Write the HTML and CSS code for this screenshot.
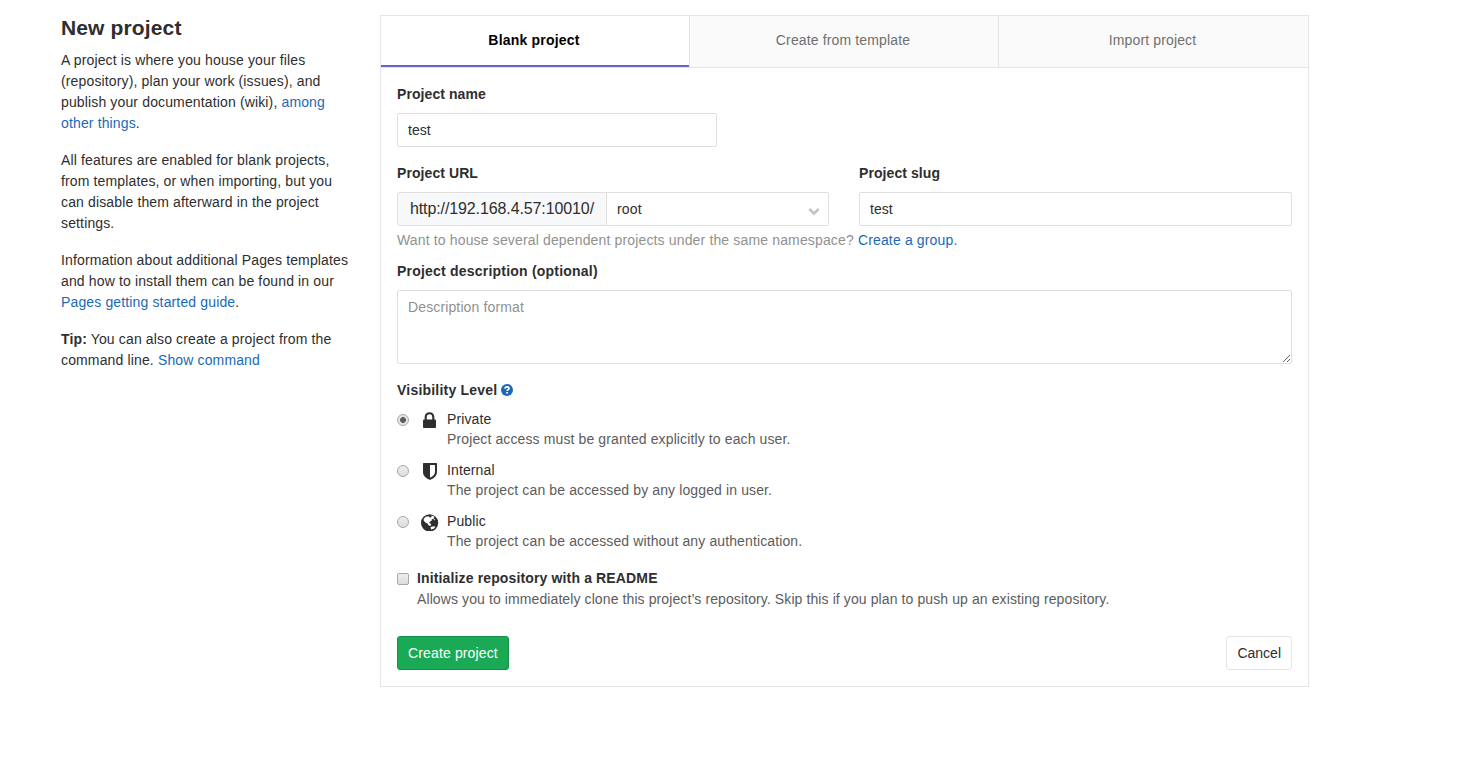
FILE: index.html
```html
<!DOCTYPE html>
<html lang="en">
<head>
<meta charset="utf-8">
<title>New project</title>
<link rel="stylesheet" href="styles.css">
</head>
<body>
<main class="page">
  <aside class="intro">
    <h1>New project</h1>
    <p>A project is where you house your files<br>(repository), plan your work (issues), and<br>publish your documentation (wiki), <a>among<br>other things</a>.</p>
    <p>All features are enabled for blank projects,<br>from templates, or when importing, but you<br>can disable them afterward in the project<br>settings.</p>
    <p>Information about additional Pages templates<br>and how to install them can be found in our<br><a>Pages getting started guide</a>.</p>
    <p><b>Tip:</b> You can also create a project from the<br>command line. <a>Show command</a></p>
  </aside>
  <section class="panel">
    <nav class="tabs">
      <a class="tab active">Blank project</a>
      <a class="tab">Create from template</a>
      <a class="tab">Import project</a>
    </nav>
    <form class="form">
      <div class="label">Project name</div>
      <input class="control name" type="text" value="test">
      <div class="columns">
        <div>
          <div class="label">Project URL</div>
          <div class="url">
            <span class="prefix">http://192.168.4.57:10010/</span>
            <div class="select"><span>root</span><svg class="chevron" viewBox="0 0 12 9"><path d="M1.4 2 6 6.6 10.600 2" fill="none" stroke="#c4c4c4" stroke-width="2.7"/></svg></div>
          </div>
        </div>
        <div>
          <div class="label">Project slug</div>
          <input class="control" type="text" value="test">
        </div>
      </div>
      <div class="help">Want to house several dependent projects under the same namespace? <a>Create a group.</a></div>
      <div class="label wide">Project description (optional)</div>
      <textarea class="control description" placeholder="Description format"></textarea>
      <div class="label wide visibility">Visibility Level
        <svg class="question" viewBox="0 0 12 12"><circle cx="6" cy="6" r="6" fill="#1b69b6"/><path d="M4 4.600C4.100 3.400 4.900 2.800 6 2.800c1.200 0 2 .6 2 1.600C8 5.600 6.100 5.600 6.100 7" fill="none" stroke="#fff" stroke-width="1.700"/><path d="M5.200 7.900h1.800v1.700H5.200z" fill="#fff"/></svg>
      </div>
      <div class="option">
        <span class="radio checked"></span>
        <svg class="icon" viewBox="0 0 18 18"><path d="M4.700 10V6.100a3.800 3.900 0 0 1 7.600 0V10" fill="none" stroke="#2e2e2e" stroke-width="2.100"/><rect x="2" y="8.600" width="13" height="8.400" rx="1" fill="#2e2e2e"/></svg>
        <div class="text"><div>Private</div><div class="muted">Project access must be granted explicitly to each user.</div></div>
      </div>
      <div class="option">
        <span class="radio"></span>
        <svg class="icon" viewBox="0 0 18 18"><path d="M2 1.700Q2 1 2.700 1h12.600q.7 0 .7.700V10c0 4-3.200 6.400-7 8-3.800-1.600-7-4-7-8zM9 3v12.700c3-1.500 5-3.200 5-5.900V3z" fill="#2e2e2e" fill-rule="evenodd"/></svg>
        <div class="text"><div>Internal</div><div class="muted">The project can be accessed by any logged in user.</div></div>
      </div>
      <div class="option">
        <span class="radio"></span>
        <svg class="icon" viewBox="0 0 18 18"><circle cx="8.600" cy="9.900" r="8.600" fill="#2e2e2e"/><path d="M2.800 5.800 4.700 3.800l2.700-.6 1.400 1.300 1.600-.3.200-1.600 2.700 1-.3 1.800-2.100.8-.5 1.700-1.600.5-.5 1.500 1.900 1.200-.7 1.900-1.700-.4-1.300-2-2.200-1.200-1.700-2.200zM12.300 6.200l2 .1-.9 1.300zM9.600 14.100l3-.9 2 .5-1.800 2-2.800.9z" fill="#fff"/></svg>
        <div class="text"><div>Public</div><div class="muted">The project can be accessed without any authentication.</div></div>
      </div>
      <div class="readme">
        <span class="checkbox"></span>
        <div><b>Initialize repository with a README</b><div class="muted">Allows you to immediately clone this project’s repository. Skip this if you plan to push up an existing repository.</div></div>
      </div>
      <div class="actions"><button class="button create" type="button">Create project</button><button class="button" type="button">Cancel</button></div>
    </form>
  </section>
</main>
</body>
</html>
```
FILE: styles.css
```css
* { box-sizing: border-box; }
body {
  margin: 0;
  background: #fff;
  color: #2e2e2e;
  font: 14px/21px "Liberation Sans", Arial, sans-serif;
  letter-spacing: 0.14px;
}
a { color: #1b69b6; text-decoration: none; }
.page { display: grid; grid-template-columns: 319px 929px; padding: 15px 0 0 61px; }
.intro { white-space: nowrap; }
h1 { margin: 0 0 9px; font-size: 21px; line-height: 26px; }
.intro p { margin: 0 0 16px; }
.panel { height: 672px; border: 1px solid #e5e5e5; }
.tabs { display: grid; grid-template-columns: 309px 309px 309px; height: 52px; border-bottom: 1px solid #e5e5e5; }
.tab {
  padding: 14px 2px 0 0;
  text-align: center;
  color: #707070;
  background: #fafafa;
  border-right: 1px solid #e5e5e5;
}
.tab:last-child { border-right: 0; }
.tab.active {
  color: #000;
  font-weight: bold;
  letter-spacing: 0.2px;
  background: linear-gradient(#6666c4, #6666c4) bottom / 100% 2px no-repeat #fff;
}
.form { padding: 16px; }
.label { height: 21px; margin-bottom: 8px; font-weight: bold; letter-spacing: 0.08px; }
.label.wide { letter-spacing: 0.21px; }
.control {
  display: block;
  width: 100%;
  height: 34px;
  margin: 0;
  padding: 6px 10px;
  font: inherit;
  color: #2e2e2e;
  background: #fff;
  border: 1px solid #dfdfdf;
  border-radius: 2px;
}
.name { width: 320px; }
.columns { display: grid; grid-template-columns: 432px 433px; gap: 30px; margin-top: 16px; }
.url { display: flex; height: 34px; }
.prefix {
  width: 210px;
  padding: 0 12px;
  font-size: 16px;
  line-height: 32px;
  letter-spacing: -0.11px;
  white-space: nowrap;
  background: #f7f8fa;
  border: 1px solid #dfdfdf;
  border-radius: 3px 0 0 3px;
}
.select {
  flex: 1;
  display: flex;
  align-items: center;
  justify-content: space-between;
  padding: 1px 8px 0 10px;
  border: 1px solid #dfdfdf;
  border-left: 0;
  border-radius: 0 2px 2px 0;
}
.chevron { width: 12px; height: 9px; margin-top: 4px; }
.help { margin: 4px 0 10px; color: #919191; letter-spacing: 0.15px; }
.description { height: 74px; resize: vertical; letter-spacing: 0.13px; }
.description::placeholder { color: #919191; }
.visibility { display: flex; align-items: center; gap: 4px; margin-top: 16px; }
.question { width: 12px; height: 12px; margin-top: -1px; }
.option { display: flex; height: 40px; margin-bottom: 11px; line-height: 20px; letter-spacing: 0.12px; }
.radio, .checkbox {
  flex: none;
  width: 12px;
  height: 12px;
  margin-top: 5px;
  border: 1px solid #a8a8a8;
  background: linear-gradient(#eee, #dcdcdc);
}
.radio { border-radius: 50%; }
.radio.checked { background: radial-gradient(circle, #5c5c5c 2.6px, #e6e6e6 3.2px); }
.checkbox { border-radius: 2px; margin-right: 8px; }
.icon { width: 18px; height: 18px; margin: 2px 8px 0 12px; }
.muted { color: #5c5c5c; }
.readme { display: flex; margin-top: 17px; }
.readme .muted { letter-spacing: 0.1px; }
.actions { display: flex; justify-content: space-between; margin-top: 26px; }
.button {
  height: 34px;
  padding: 0 10px;
  font: inherit;
  letter-spacing: 0;
  color: #2e2e2e;
  background: #fff;
  border: 1px solid #e5e5e5;
  border-radius: 3px;
}
.button.create { color: #fff; background: #1aaa55; border-color: #168f48; letter-spacing: 0.14px; }
```
